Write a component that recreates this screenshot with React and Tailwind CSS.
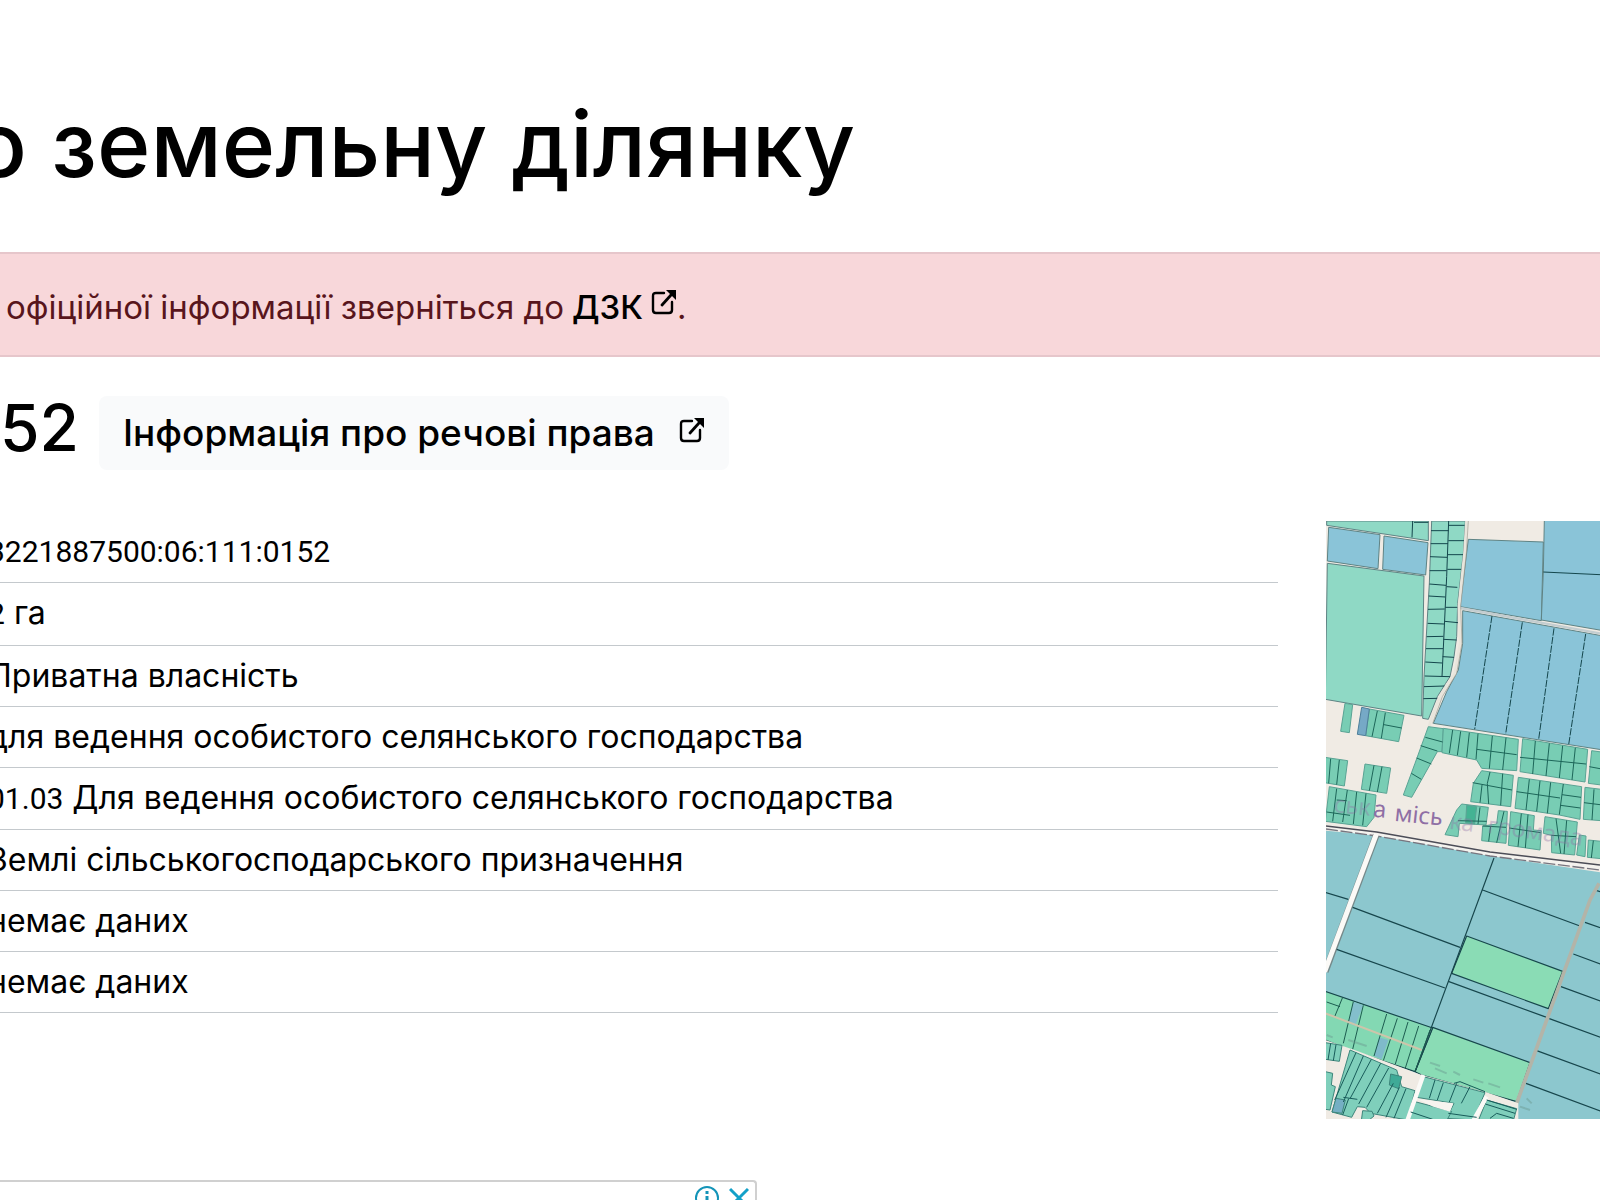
import React from 'react';

const rows = [
  { code: '3221887500:06:111:0152' },
  { code: '2', text: 'га' },
  { text: 'Приватна власність' },
  { text: 'для ведення особистого селянського господарства' },
  { code: '01.03', text: 'Для ведення особистого селянського господарства' },
  { text: 'Землі сільськогосподарського призначення' },
  { text: 'немає даних' },
  { text: 'немає даних' },
];

const ExternalIcon = () => (
  <svg className="block h-[26px] w-[26px]" viewBox="0 0 26 26" fill="none" stroke="currentColor" aria-hidden="true">
    <path d="M13 4H5Q2 4 2 7V21Q2 24 5 24H18Q21 24 21 21V13" strokeWidth="2.4" strokeLinecap="round" />
    <path d="M11 16L20 6" strokeWidth="2.8" strokeLinecap="round" />
    <path d="M15 1H25V11Z" fill="currentColor" stroke="none" />
  </svg>
);

const CadastreMap = () => (
  <svg
    className="block w-full h-[598px]"
    viewBox="78 33 822 1794"
    preserveAspectRatio="xMinYMin slice"
    role="img"
    aria-label="Карта ділянки"
    strokeLinejoin="round"
  >
    <rect x="78" y="33" width="4000" height="1794" fill="#f0ebe4" />

    {/* northern fields */}
    <g stroke="#5f8384" strokeWidth="3">
      <g fill="#8fd9c5">
        <path d="M80 33H385V92L80 46Z" />
        <path d="M82 160L372 198L365 618L76 568Z" />
        <path d="M395 33H496L490 130L473 280L470 380L462 440L450 500L437 520L412 560L385 628L368 625L372 500L388 220Z" />
      </g>
      <g fill="#8ac4d8">
        <path d="M86 52L240 74L234 176L82 153Z" />
        <path d="M252 78L384 98L377 195L248 178Z" />
        <path d="M505 88L730 96L724 332L480 290Z" />
        <path d="M733 30H910V362L724 330L730 186Z" />
        <path d="M488 302L910 378V720L400 640L440 545L475 480L488 400Z" />
      </g>
    </g>
    <g stroke="#14464c" strokeWidth="3" fill="none">
      <path d="M338 33L336 82M342 37H385M446 33L440 200L426 500M730 186L900 194" />
      <path d="M393 62H446M392 101H444M390 140L441 142M389 182H440M388 222L438 226M386 258L436 261M384 298L434 297M383 340L432 342M380 380L430 379M378 416H429M376 456L427 459M374 498L450 500M372 530L433 528M370 566L412 565" />
      <path d="M446 46H494M445 92H492M443 134H489M442 178H484M440 230L472 232M436 292H475M434 334L474 338M430 388L470 390M428 440L462 442" />
      <path d="M576 318L524 658M667 337L617 672M762 355L716 688M857 372L806 704" strokeDasharray="22 4" />
    </g>
    <path d="M480 294L900 370" stroke="#c3cdd0" strokeWidth="7" />
    <path d="M500 33L494 130L477 290L481 400L465 490L420 560L390 640L375 700" fill="none" stroke="#e9e5dc" strokeWidth="9" />
    <path d="M505 33L499 130L482 290L486 400L470 490L427 560L398 640" fill="none" stroke="#9b9a90" strokeWidth="2" />

    {/* village plots */}
    <g transform="translate(0 570)">
      <g fill="#78cdb4" stroke="#5aa394" strokeWidth="3">
        <path d="M135 10L158 14L148 98L122 94Z" />
        <path d="M208 27L312 46L296 125L197 107Z" />
        <path d="M74 172L143 182L133 258L74 248Z" />
        <path d="M195 192L272 204L260 280L184 268Z" />
        <path d="M88 260L228 285L222 352L200 380L76 364Z" />
        <path d="M385 80L430 86L426 155L412 155L335 292L310 285L345 190Z" />
        <path d="M430 85L655 118L650 212L545 205L530 180L426 158Z" />
        <path d="M668 116L863 148L855 246L660 215Z" />
        <path d="M875 152L904 156V255L865 250Z" />
        <path d="M545 212L640 226L632 320L512 305L520 250Z" />
        <path d="M655 232L845 260L840 358L778 345L645 325Z" />
        <path d="M855 262L904 268V362L850 358Z" />
        <path d="M485 312L565 322L558 375L478 370L474 410L435 404L470 330Z" />
        <path d="M595 332L622 334L618 430L545 422L548 378L590 372Z" />
        <path d="M632 335L703 347L700 390L724 392L720 450L625 436Z" />
        <path d="M735 350L832 366L824 465L755 458L754 406L730 400Z" />
        <path d="M838 405L858 408L855 470L830 465Z" />
        <path d="M865 420L904 424V476L862 472Z" />
        <path d="M500 316L530 320L524 372L497 368Z" fill="#44b393" />
      </g>
      <path d="M185 22L208 27L197 107L172 103Z" fill="#76a9c6" stroke="#4e7f9a" strokeWidth="3" />
      <g stroke="#1d6659" strokeWidth="3" fill="none">
        <path d="M232 33L216 110M256 38L244 115M252 74L305 84" />
        <path d="M92 176L86 250M118 180L110 254M222 196L208 272M246 200L232 276M110 266L98 364M142 270L128 366M170 276L160 372M198 280L188 376M80 336L150 346M110 300L140 302" />
        <path d="M376 112L428 126M362 137L412 153M350 174L394 192M334 220L364 238" />
        <path d="M458 90L448 160M482 94L472 166M508 98L500 172M534 101L528 178M577 108L568 206M618 113L608 210M530 148L650 164M660 172L858 192" />
        <path d="M706 123L698 222M748 130L738 228M788 137L778 234M826 143L816 240M868 200L900 206" />
        <path d="M570 216L562 250L566 312M608 221L602 316M518 248L636 270M546 255L540 308M688 238L678 330M720 243L710 334M752 247L742 340M790 252L778 344M650 275L780 294M786 284L843 292M782 316L841 324M852 308L900 314M882 268L876 360" />
        <path d="M540 322L534 372M474 362L560 364M612 334L590 428M572 378L566 424M548 378L618 382M664 341L654 440M684 344L676 444M628 384L722 398M768 356L782 460M800 361L792 462M754 406L828 410M880 422L874 474" />
      </g>

      {/* area label */}
      <g fill="#8f6fa5" fontFamily="'Noto Sans', sans-serif" fontSize="70">
        <text x="218" y="350" transform="rotate(5 218 350)">а</text>
        <text x="282" y="362" transform="rotate(6 282 362)">місь</text>
        <g opacity="0.35">
          <text x="100" y="336" transform="rotate(6 100 336)">ськ</text>
          <text x="446" y="386" transform="rotate(8 446 386)">ка</text>
          <text x="560" y="398" transform="rotate(8 560 398)">громада</text>
        </g>
      </g>
    </g>

    {/* southern fields */}
    <path d="M78 962L230 976L570 1038L910 1088V1840H78Z" fill="#8cc7ce" />
    <path d="M78 952L230 970L570 1030L900 1074" fill="none" stroke="#f4f2ee" strokeWidth="14" />
    <path d="M78 948L230 966L570 1026L900 1065" fill="none" stroke="#4c4d57" strokeWidth="5" />
    <path d="M78 957L230 978L570 1038L900 1080" fill="none" stroke="#77757f" strokeWidth="4" strokeDasharray="36 8" />
    <path d="M229 975L76 1385" stroke="#75898a" strokeWidth="20" />
    <path d="M229 972L74 1385" stroke="#fbfaf7" strokeWidth="15" />

    <g transform="translate(0 1170)">
      <g stroke="#17464c" strokeWidth="3.5" fill="none">
        <path d="M500 108L788 214L745 326L455 220Z" fill="#8adcb5" />
        <path d="M398 382L690 488L650 605L365 525L345 515Z" fill="#8adcb5" />
        <path d="M76 274L398 384L345 515L150 450L76 420Z" fill="#83d8b3" />
        <path d="M582 -126L345 515M548 -30L840 78M76 -23L145 -2M158 22L480 142M110 148L435 264M445 244L740 352" />
        <path d="M888 -29L904 -24M855 67L904 84M820 162L904 193M783 260L904 304M748 356L904 413M710 452L904 523M678 550L904 634" />
      </g>
      <path d="M160 305L190 316L165 378L145 370Z" fill="#83bfcc" />
      <path d="M237 412L265 420L245 478L222 468Z" fill="#7fbaca" />
      <g stroke="#1d5c50" strokeWidth="3" fill="none">
        <path d="M80 306L120 320M128 292L104 350M160 305L130 430M190 316L158 448M260 342L222 468M292 355L250 482M324 366L286 492M356 378L316 504M390 390L345 515" />
      </g>
      <path d="M76 340L365 450" stroke="#cdc5aa" strokeWidth="6" />
      <path d="M897 -50L870 0L650 610" fill="none" stroke="#b3b4a8" strokeWidth="11" />

      {/* gardens along the bottom edge */}
      <path d="M76 420L170 452L365 525L555 575L655 610V660H76Z" fill="#f0ebe4" />
      <g fill="#7fcfbb" stroke="#3d857b" strokeWidth="3">
        <path d="M76 428L126 436L118 484L76 478Z" />
        <path d="M150 450L290 510L305 560L345 572L322 660L212 640L195 622L172 620L155 652L96 636Z" />
        <path d="M76 515L98 520L94 555L106 560L90 630L76 628Z" />
        <path d="M370 530L555 578L520 660L440 655L462 610L350 592Z" />
        <path d="M345 605L455 634L440 662H325Z" />
        <path d="M560 600L650 626L640 662H535Z" />
        <path d="M188 632L216 634L222 648L205 662H184Z" />
        <path d="M272 522L305 530L296 566L268 555Z" fill="#3faa97" />
        <path d="M108 595L136 600L126 640L96 636Z" fill="#75afc4" />
      </g>
      <path d="M352 597L460 610L450 635L400 620Z" fill="#f6f4ef" />
      <path d="M560 590L520 662M370 525L322 662" stroke="#fbfaf7" strokeWidth="13" />
      <g stroke="#185c5a" strokeWidth="3" fill="none">
        <path d="M92 430L84 480M108 434L100 482M168 458L104 600M190 468L130 606M214 478L150 596M242 490L176 612M266 504L200 622M280 550L232 640M298 562L258 652M318 566L282 655M130 592L172 598M146 596L128 645" />
        <path d="M405 540L388 595M430 548L412 600M470 550L448 606M462 550L480 545L555 575M510 560L484 610M332 636L398 658M445 640L530 652M560 600L650 628M556 612L645 640M570 655L590 640L640 655" />
      </g>
      <g stroke="#6b9a91" strokeWidth="6" opacity="0.45" fill="none">
        <path d="M390 488L420 498M405 505L440 520M460 515L480 525M520 538L550 548M565 550L600 562" />
        <path d="M80 405L98 412M145 420L200 438M660 620L690 630M680 595L695 610" />
      </g>
    </g>
  </svg>
);

const App = () => {
  return (
    <div className="min-h-[1200px] overflow-hidden bg-white text-black font-[Inter,sans-serif]">
      <header className="flex h-[252px] items-end pb-14">
        <h1 className="-ml-7 whitespace-nowrap text-[91px] leading-[104px] font-medium">о земельну ділянку</h1>
      </header>

      <div role="alert" className="flex h-[105px] items-center border-y-2 border-[#e6c6cb] bg-[#f8d7da] pt-1 pl-1.5 text-[33px] leading-[48px] text-[#58151c]">
        <p className="flex whitespace-nowrap">
          <span className="pr-2">офіційної інформації зверніться до</span>
          <a href="#dzk" className="flex gap-2 font-medium text-black">
            ДЗК
            <span className="pt-1.5"><ExternalIcon /></span>
          </a>
          .
        </p>
      </div>

      <section className="flex items-start gap-5 pt-[39px]">
        <h2 className="text-[64px] leading-[64px] font-medium">52</h2>
        <a href="#rights" className="flex h-[74px] items-center gap-6 rounded-lg bg-[#f9fafb] px-6 text-[37px] font-medium whitespace-nowrap">
          Інформація про речові права
          <span className="pb-1.5"><ExternalIcon /></span>
        </a>
      </section>

      <main className="flex items-start gap-12 pt-[51px]">
        <table className="-ml-3 h-[492px] w-[1290px] shrink-0 border-collapse text-[32px] leading-10">
          <tbody>
            {rows.map(({ code, text }, i) => (
              <tr key={i} className="border-b border-[#c4c9cd]">
                <td className="p-0 whitespace-nowrap">
                  {code && <span className="font-[Roboto,sans-serif] text-[30px]">{code}</span>} {text}
                </td>
              </tr>
            ))}
          </tbody>
        </table>
        <div className="min-w-0 flex-1">
          <CadastreMap />
        </div>
      </main>

      <aside className="mt-[61px] flex h-[21px] w-[757px] justify-end gap-2.5 overflow-hidden rounded-tr border-t-2 border-r-2 border-[#d0d0d0] pr-1.5 pt-1">
        <svg className="h-6 w-6 shrink-0" viewBox="0 0 24 24" fill="none" stroke="#1494b8" strokeWidth="2" aria-hidden="true">
          <circle cx="12" cy="12" r="11" />
          <path d="M12 5V8M12 10V19" strokeWidth="3" />
        </svg>
        <svg className="h-6 w-5 shrink-0" viewBox="0 0 20 24" fill="none" stroke="#12a0c8" strokeWidth="3" aria-hidden="true">
          <path d="M1 3L10 12L19 3M1 21L10 12L19 21" />
        </svg>
      </aside>
    </div>
  );
};

export default App;
